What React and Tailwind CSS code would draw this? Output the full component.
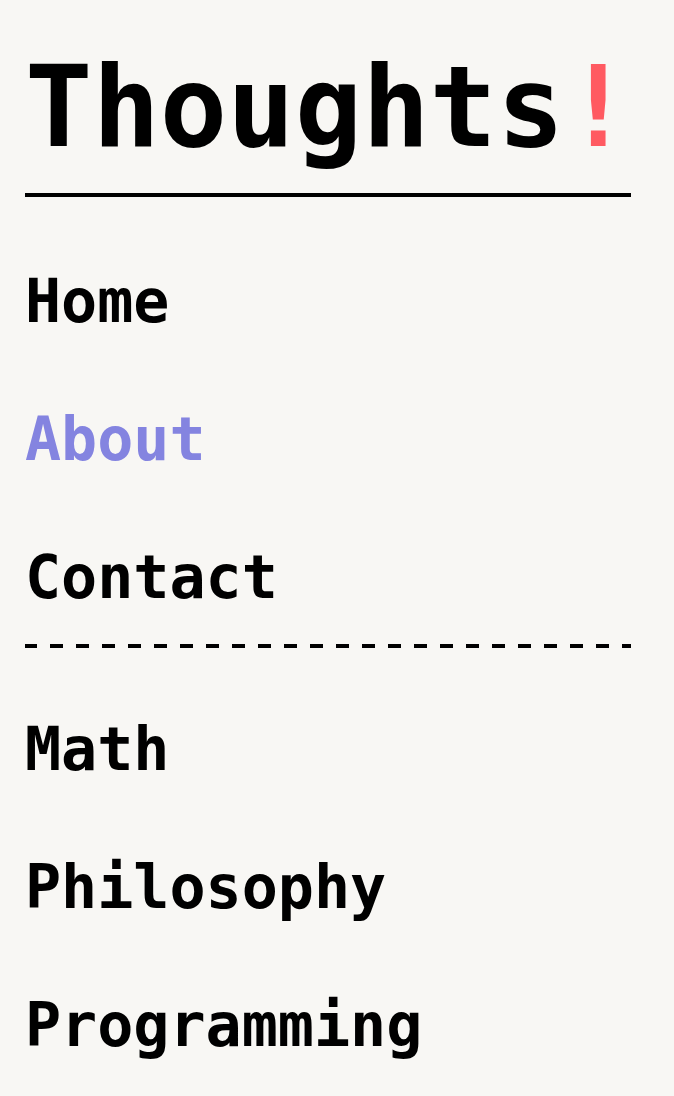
import React from "react";

const mainLinks = [
	{ id: 1, label: "Home", active: false },
	{ id: 2, label: "About", active: true },
	{ id: 3, label: "Contact", active: false },
];

const topicLinks = [
	{ id: 4, label: "Math" },
	{ id: 5, label: "Philosophy" },
	{ id: 6, label: "Programming" },
];

const App = () => {
	return (
		<div className="min-h-screen w-full bg-[#f8f7f4] font-['DejaVu_Sans_Mono','Liberation_Mono',monospace] text-black">
			<div className="ml-[25px] w-[606px] pt-[51px]">
				{/* title */}
				<h1 className="text-[112px] leading-[112px] font-bold whitespace-nowrap">
					Thoughts<span className="text-[#ff5a61]">!</span>
				</h1>
				<hr className="mt-[30px] border-0 border-b-4 border-black" />

				{/* main menu */}
				<nav className="mt-[74px] flex flex-col gap-[78px]">
					{mainLinks.map((item) => (
						<a
							key={item.id}
							href="#"
							className={`text-[60px] leading-[60px] font-bold ${
								item.active ? "text-[#8484e0]" : "text-black"
							}`}
						>
							{item.label}
						</a>
					))}
				</nav>

				{/* dashed divider */}
				<div className="mt-[37px] h-1 bg-[repeating-linear-gradient(90deg,#000_0_12px,transparent_12px_25px,#000_25px_26px)]" />

				{/* topics */}
				<nav className="mt-[71px] flex flex-col gap-[78px] pb-10">
					{topicLinks.map((item) => (
						<a key={item.id} href="#" className="text-[60px] leading-[60px] font-bold text-black">
							{item.label}
						</a>
					))}
				</nav>
			</div>
		</div>
	);
};

export default App;
